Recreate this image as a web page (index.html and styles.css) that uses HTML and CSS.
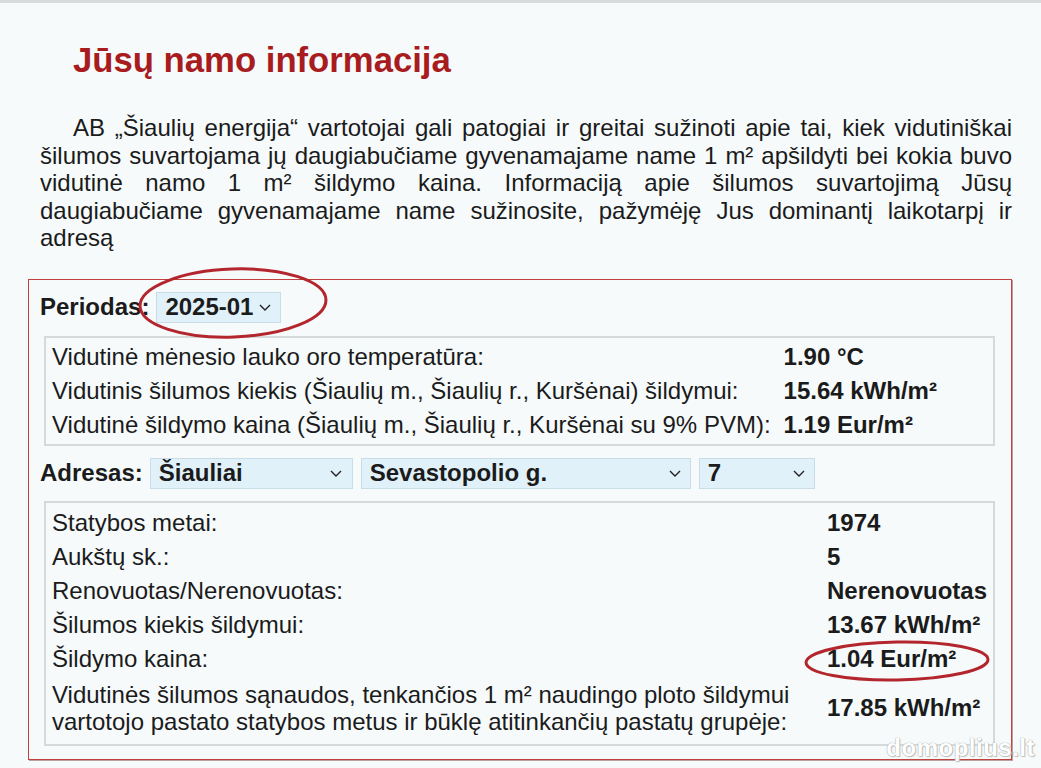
FILE: index.html
```html
<!DOCTYPE html>
<html lang="lt">
<head>
<meta charset="utf-8">
<title>Jūsų namo informacija</title>
<link rel="stylesheet" href="styles.css">
</head>
<body>
<div class="topbar"></div>
<main class="page">
  <h1 class="title">Jūsų namo informacija</h1>
  <p class="intro">AB „Šiaulių energija“ vartotojai gali patogiai ir greitai sužinoti apie tai, kiek vidutiniškai šilumos suvartojama jų daugiabučiame gyvenamajame name 1 m² apšildyti bei kokia buvo vidutinė namo 1 m² šildymo kaina. Informaciją apie šilumos suvartojimą Jūsų daugiabučiame gyvenamajame name sužinosite, pažymėję Jus dominantį laikotarpį ir adresą</p>

  <section class="panel">
    <div class="field-row">
      <span class="field-label">Periodas:</span>
      <div class="select sel-period"><span>2025-01</span><svg class="chev" viewBox="0 0 12 7" width="12" height="7"><path d="M1 1 L6 6 L11 1" fill="none" stroke="#222" stroke-width="1.4"/></svg></div>
    </div>

    <div class="infobox box-period">
      <table class="info">
        <tr><td>Vidutinė mėnesio lauko oro temperatūra:</td><td class="val">1.90 °C</td></tr>
        <tr><td>Vidutinis šilumos kiekis (Šiaulių m., Šiaulių r., Kuršėnai) šildymui:</td><td class="val">15.64 kWh/m²</td></tr>
        <tr><td>Vidutinė šildymo kaina (Šiaulių m., Šiaulių r., Kuršėnai su 9% PVM):</td><td class="val">1.19 Eur/m²</td></tr>
      </table>
    </div>

    <div class="field-row">
      <span class="field-label">Adresas:</span>
      <div class="select sel-city"><span>Šiauliai</span><svg class="chev" viewBox="0 0 12 7" width="12" height="7"><path d="M1 1 L6 6 L11 1" fill="none" stroke="#222" stroke-width="1.4"/></svg></div>
      <div class="select sel-street"><span>Sevastopolio g.</span><svg class="chev" viewBox="0 0 12 7" width="12" height="7"><path d="M1 1 L6 6 L11 1" fill="none" stroke="#222" stroke-width="1.4"/></svg></div>
      <div class="select sel-no"><span>7</span><svg class="chev" viewBox="0 0 12 7" width="12" height="7"><path d="M1 1 L6 6 L11 1" fill="none" stroke="#222" stroke-width="1.4"/></svg></div>
    </div>

    <div class="infobox box-house">
      <table class="info full">
        <tr><td>Statybos metai:</td><td class="val">1974</td></tr>
        <tr><td>Aukštų sk.:</td><td class="val">5</td></tr>
        <tr><td>Renovuotas/Nerenovuotas:</td><td class="val">Nerenovuotas</td></tr>
        <tr><td>Šilumos kiekis šildymui:</td><td class="val">13.67 kWh/m²</td></tr>
        <tr><td>Šildymo kaina:</td><td class="val">1.04 Eur/m²</td></tr>
        <tr><td>Vidutinės šilumos sąnaudos, tenkančios 1 m² naudingo ploto šildymui vartotojo pastato statybos metus ir būklę atitinkančių pastatų grupėje:</td><td class="val">17.85 kWh/m²</td></tr>
      </table>
    </div>
  </section>
</main>

<svg class="marks" viewBox="0 0 1041 768" width="1041" height="768">
  <ellipse cx="233" cy="303" rx="93" ry="34" fill="none" stroke="#b3262d" stroke-width="3" transform="rotate(-2 233 303)"/>
  <ellipse cx="897" cy="661" rx="91" ry="19" fill="none" stroke="#b3262d" stroke-width="3" transform="rotate(-1 897 661)"/>
</svg>
<div class="watermark">domoplius.lt</div>
</body>
</html>
```

FILE: styles.css
```css
html, body {
  margin: 0;
  padding: 0;
}
body {
  background: #f6fafb;
  font-family: "Liberation Sans", Arial, sans-serif;
  color: #1b1b1b;
  width: 1041px;
  height: 768px;
  overflow: hidden;
  position: relative;
}
.topbar {
  height: 3px;
  background: #d9dcdd;
}
.page {
  padding: 0 29px 0 28px;
}
.title {
  margin: 37px 0 0 45px;
  font-size: 34.7px;
  font-weight: bold;
  color: #a81c20;
  line-height: 40px;
}
.intro {
  margin: 34px 0 0 12px;
  font-size: 24px;
  line-height: 27.6px;
  text-align: justify;
  text-indent: 33px;
}
.panel {
  margin-top: 27px;
  border: 1px solid #c2413c;
  box-shadow: 1px 1px 0 rgba(110, 50, 50, 0.45);
  padding: 12px 12px 13px 11px;
}
.field-row {
  display: flex;
  align-items: center;
  gap: 8px;
}
.field-label {
  font-size: 24px;
  font-weight: bold;
  margin-right: -1px;
}
.select {
  border: 1px solid #c9dde8;
  background: #e1f1fa;
  display: flex;
  align-items: center;
  justify-content: space-between;
  padding: 0 9px 0 8px;
  font-size: 24px;
  font-weight: bold;
  box-sizing: border-box;
  height: 31px;
}
.chev {
  display: block;
  flex: none;
}
.sel-period {
  width: 125px;
}
.sel-city {
  width: 203px;
  padding-right: 10px;
}
.sel-street {
  width: 330px;
}
.sel-no {
  width: 116px;
}
.infobox {
  margin: 0 4px;
  border: 2px solid #d5d9db;
  padding: 2px;
}
.box-period {
  margin-top: 13px;
  margin-bottom: 12px;
}
.box-period .val {
  padding-left: 9px;
}
.box-house {
  margin-top: 12px;
}
.info {
  border-collapse: collapse;
  font-size: 24px;
  line-height: 27.6px;
}
.info td {
  padding: 3.2px 4px;
  vertical-align: middle;
}
.info.full {
  width: 100%;
}
.info.full tr:first-child td {
  padding-top: 4px;
}
.info.full tr:last-child td {
  padding-top: 5px;
  padding-bottom: 6px;
}
.info .val {
  font-weight: bold;
  white-space: nowrap;
}
.info.full .val {
  width: 1%;
}
.marks {
  position: absolute;
  left: 0;
  top: 0;
  pointer-events: none;
}
.watermark {
  position: absolute;
  right: 6px;
  bottom: 6px;
  font-size: 24px;
  font-weight: bold;
  color: #ffffff;
  letter-spacing: 0.5px;
  text-shadow: 0 0 1px #a9acad, 0 0 1px #a9acad, 1px 1px 1px #c0c2c3;
}
```
